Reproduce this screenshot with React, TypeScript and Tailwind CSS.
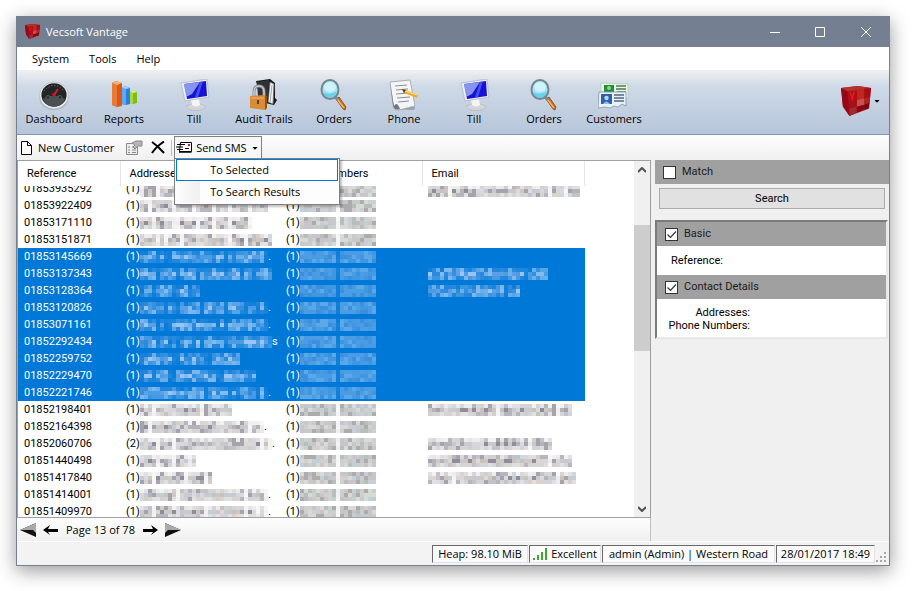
import React, { useState } from "react";
import { FaCaretDown } from "react-icons/fa";

const customers = [
  { ref: "01853935292", count: 1, address: " ### #### ##### #####", email: "##### ######################## ### ###", clipped: true },
  { ref: "01853922409", count: 1, address: "## ##### #### #### ### #### ####", email: "" },
  { ref: "01853171110", count: 1, address: "### ####  #### ### ### #### ", email: "" },
  { ref: "01853151871", count: 1, address: "#### # ### ########### ### ######", email: "" },
  { ref: "01853145669", count: 1, address: "#### #  ############# # ####### ", more: ".", email: "", selected: true },
  { ref: "01853137343", count: 1, address: "#### #### #### ########## ## ####", email: "######################## #####", selected: true },
  { ref: "01853128364", count: 1, address: " ## #### ### ##", email: "################### ###", selected: true },
  { ref: "01853120826", count: 1, address: "###### ## ##### ##### #### ## # ", more: ".", email: "", selected: true },
  { ref: "01853071161", count: 1, address: "#### #  ########### # ######### ", more: ".", email: "", selected: true },
  { ref: "01852292434", count: 1, address: "#### ## # ### # ##### ###########", more: "s", email: "", selected: true },
  { ref: "01852259752", count: 1, address: " #######  ######  #######", email: "", selected: true },
  { ref: "01852229470", count: 1, address: " ## ###  ##########  ########", email: "", selected: true },
  { ref: "01852221746", count: 1, address: "################ ##### # #### # ", more: ".", email: "", selected: true },
  { ref: "01852198401", count: 1, address: "### ########### #######", email: "################# ############## ###" },
  { ref: "01852164398", count: 1, address: "## ######################## ## ", more: ".", email: "" },
  { ref: "01852060706", count: 2, address: "#### ### ##################### # ", more: ".", email: "######################### #####" },
  { ref: "01851440498", count: 1, address: "#### ### ### #", email: "############################## #####" },
  { ref: "01851417840", count: 1, address: "### ####### #### #", email: "###### ######################### ####" },
  { ref: "01851414001", count: 1, address: "######### ################ #### ", more: ".", email: "" },
  { ref: "01851409970", count: 1, address: "### ############ ######### ## # ", more: ".", email: "" },
];

const greys = ["#c9c8cc", "#b4b3ba", "#d9d6d8", "#a5a3ad", "#c8c2bd", "#dbd8de", "#8f8d99", "#c5ccd2", "#d0c7c1"];
const phoneGreys = ["#c6cac9", "#d0d0cc", "#b7bfbd", "#c9c4cc", "#d8dad8", "#adacaa", "#c4cfd6"];
const blues = ["#4a9de4", "#6cb0ea", "#3390e0", "#5aa0e6", "#82bbf0", "#2a8ade", "#9cc4f2"];
const phoneBlues = ["#3f97e1", "#4c9ee3", "#3a90de", "#5aa8e8", "#4b9ae6"];

// Masked text: one character of the pattern is one 4px block
const Mosaic = ({ pattern, colors, seed, solid = false }: { pattern: string; colors: string[]; seed: number; solid?: boolean }) => {
  const cells: React.ReactNode[] = [];
  pattern.split("").forEach((c, x) => {
    for (let y = 0; y < 3; y++) {
      const n = Math.abs(Math.floor(Math.sin(seed * 91.7 + x * 12.9 + y * 78.2) * 43758));
      let opacity = c === " " ? 0.2 : 1;
      if (!solid && c !== " " && y === 0) opacity = n % 5 < 3 ? 0.8 : 0.35;
      if (!solid && c !== " " && y === 2) opacity = 0.8;
      cells.push(<rect key={x + "-" + y} x={x * 4} y={y * 4} width="4" height="4" fill={colors[n % colors.length]} opacity={opacity} />);
    }
  });
  return (
    <svg width={pattern.length * 4} height="12" shapeRendering="crispEdges" aria-hidden="true" className="shrink-0">
      {cells}
    </svg>
  );
};

const CubeIcon = ({ size }: { size: number }) => (
  <svg width={size} height={size} viewBox="0 0 32 32">
    <path d="M0 2 18 0 32 2 30 24 9 32 2 22Z" fill="#a80d16" />
    <path d="M0 2 18 0 32 2 7 6Z" fill="#b3322e" />
    <path d="M0 2 7 6 9 32 2 21Z" fill="#94081a" />
    <path d="M7 6 17 4.500 17 15 8 17Z" fill="#ad1119" />
    <path d="M17 4.500 25 3 25 13 17 15Z" fill="#c0281f" />
    <path d="M25 3 32 2 31 12 25 13Z" fill="#a30f16" />
    <path d="M17 15 25 13 25 20 17 22Z" fill="#c6524e" />
    <path d="M25 13 31 12 30 19 25 20Z" fill="#b3221f" />
    <path d="M8 17 17 15 17 22 9 24Z" fill="#a5101b" />
    <path d="M9 24 17 22 17 28 9 32Z" fill="#a22a32" />
    <path d="M17 22 25 20 25 25 17 28Z" fill="#8b0610" />
    <path d="M25 20 30 18 29 24 25 25Z" fill="#740410" />
    <path d="m10 7 2 7 2-8" stroke="#f3141c" strokeWidth="1.500" fill="none" />
  </svg>
);

const DashboardIcon = () => (
  <svg width="32" height="32" viewBox="0 0 32 32">
    <ellipse cx="16" cy="19" rx="14.5" ry="12" fill="#a9b0b8" />
    <ellipse cx="16" cy="16.5" rx="14.5" ry="13.5" fill="#e9ebed" stroke="#b3b8be" strokeWidth=".7" />
    <ellipse cx="16" cy="16" rx="12.6" ry="11.8" fill="#232425" />
    <path d="M5 20q11-7 22 0-3 7.500-11 7.500T5 20Z" fill="#4a5053" />
    <path d="M6 12q10-11 20 0" stroke="#8a8d8f" strokeDasharray="1 2" fill="none" />
    <circle cx="10" cy="18.500" r="2" fill="#2a3130" stroke="#58605b" />
    <circle cx="22" cy="18.500" r="2" fill="#2a3130" stroke="#58605b" />
    <path d="m16 16 4-6" stroke="#f01820" strokeWidth="1.800" />
    <circle cx="16" cy="15.500" r="1.800" fill="#d3111b" />
  </svg>
);

const ReportsIcon = () => (
  <svg width="32" height="32" viewBox="0 0 32 32">
    <path d="M4 4 8 2l6 2v23l-5 1-5-2Z" fill="#d9581a" />
    <path d="m4 4 5 2v22l-5-2Z" fill="#e97a34" />
    <path d="M4 4 8 2l6 2-5 2Z" fill="#f7b27a" />
    <path d="m14 9 3-2 5 2v16l-4 1-4-1Z" fill="#2a7fe0" />
    <path d="m14 9 4 1v16l-4-1Z" fill="#5aaaf6" />
    <path d="m14 9 3-2 5 2-4 1Z" fill="#a2d4ff" />
    <path d="m22 13 3-2 4 2v11l-4 1-3-1Z" fill="#80bd1b" />
    <path d="m22 13 3 1v11l-3-1Z" fill="#a9d838" />
    <path d="m22 13 3-2 4 2-4 1Z" fill="#d8f28f" />
  </svg>
);

const TillIcon = () => (
  <svg width="32" height="32" viewBox="0 0 32 32">
    <ellipse cx="18" cy="28" rx="9.500" ry="3.500" fill="#d3d5d8" stroke="#afb3b8" strokeWidth=".6" />
    <path d="m13 21 8-1 1 6q-4 3-8 0Z" fill="#f3f4f5" />
    <path d="m3 4 26-4 2 18-24 4Z" fill="#eef0f2" stroke="#a9b0b8" strokeWidth=".7" />
    <path d="m6 5 22-3 1 15-20 3Z" fill="#1512d6" />
    <path d="m6 5 16-2-8 12-6 3Z" fill="#a9c0f8" opacity=".75" />
    <path d="m22 3 3-1-5 16-3 .5Z" fill="#5a6cf0" opacity=".7" />
  </svg>
);

const AuditIcon = () => (
  <svg width="32" height="32" viewBox="0 0 32 32">
    <path d="m8 2 14-2 5 4v15l2 2-3 5-13-3Z" fill="#171819" />
    <path d="m22 3 4 2-1 20-5-2Z" fill="#f1f2f3" stroke="#676a6d" strokeWidth=".8" />
    <path d="m24 6-2 18" stroke="#a5a8ab" />
    <path d="m9 3 12-2-1 21-10-3Z" fill="#303234" />
    <path d="M6 17v-4q0-6 5-6t5 6v4" stroke="#8a9097" strokeWidth="3" fill="none" />
    <path d="M6 17v-4q0-6 5-6t5 6v4" stroke="#dfe2e5" strokeWidth="1" fill="none" />
    <path d="m2 17 15-1 2 2v11l-2 2-15-2Z" fill="#d98b38" />
    <path d="m17 16 2 2v11l-2 2Z" fill="#91531b" />
    <path d="M3 19h13" stroke="#efb16b" />
    <path d="M9 21h2v4H9z" fill="#6a3b12" />
  </svg>
);

const OrdersIcon = () => (
  <svg width="32" height="32" viewBox="0 0 32 32">
    <path d="m18 20 7 10 2 1 1-3-7-10Z" fill="#c97424" stroke="#80440f" strokeWidth=".8" />
    <path d="m19 20 7 9" stroke="#f5b565" strokeWidth="1.300" />
    <path d="m16 17 4 4" stroke="#7c8890" strokeWidth="3" />
    <ellipse cx="12" cy="10.500" rx="8.500" ry="9.500" fill="#a3e4f6" stroke="#79858c" strokeWidth="2" />
    <ellipse cx="12" cy="8" rx="6" ry="5" fill="#dcf8ff" opacity=".75" />
    <path d="M5 13q7 4 14-1-2 7-7 7t-7-6Z" fill="#5bcbe8" opacity=".8" />
  </svg>
);

const PhoneIcon = () => (
  <svg width="32" height="32" viewBox="0 0 32 32">
    <path d="m4 5 5 21 18 2-1 3-20-1Z" fill="#9a9da1" />
    <path d="m2 3 20-2 5 26-16 4q-5 1-6-5Z" fill="#f4f5f6" stroke="#9da1a6" strokeWidth=".8" />
    <path d="m2 3 4 24q3-5 6 3-6 2-7-4Z" fill="#74787d" />
    <path d="m7 7 12-1M8 11l12-1M8 15l13-1M9 19l13-1M10 23l11-1" stroke="#8a8e93" />
    <path d="m14 10 2 4 13 5 1-3-12-5Z" fill="#edae2c" />
    <path d="m14 10 4 1-2 3Z" fill="#4d3826" />
    <path d="m17 12 12 4" stroke="#ffe27b" />
  </svg>
);

const CustomersIcon = () => (
  <svg width="32" height="32" viewBox="0 0 32 32">
    <path d="m3 4 27 1v14H3Z" fill="#e8f6e6" stroke="#a8cfa6" strokeWidth=".7" />
    <path d="M6 6h10v8H6z" fill="#278c3b" />
    <circle cx="11" cy="9" r="2" fill="#8fd798" />
    <path d="M18 7h10M18 10h10M19 13h9" stroke="#4d7a54" strokeWidth="1.500" />
    <path d="M1 13h27v14l-4-2-4 3-4-1-4 2-5-1-7 1Z" fill="#e9f2fb" stroke="#8295a9" strokeWidth=".8" />
    <path d="M3 15h11v10H3z" fill="#2b62aa" />
    <circle cx="8.500" cy="19" r="2.200" fill="#b9d8f4" />
    <path d="M5 25q3-5 7 0Z" fill="#94c0ec" />
    <path d="M16 16h10M16 19h10M16 22h10" stroke="#56677b" strokeWidth="1.400" />
  </svg>
);

const modules = [
  { name: "Dashboard", icon: <DashboardIcon /> },
  { name: "Reports", icon: <ReportsIcon /> },
  { name: "Till", icon: <TillIcon /> },
  { name: "Audit Trails", icon: <AuditIcon /> },
  { name: "Orders", icon: <OrdersIcon /> },
  { name: "Phone", icon: <PhoneIcon /> },
  { name: "Till", icon: <TillIcon /> },
  { name: "Orders", icon: <OrdersIcon /> },
  { name: "Customers", icon: <CustomersIcon /> },
];

const Check = ({ label, checked = false }: { label: string; checked?: boolean }) => (
  <label className="flex h-6 items-center gap-[6px] bg-[#a0a0a0] pl-2 text-[#1c1c1c]">
    <span className="grid">
      <input
        type="checkbox"
        defaultChecked={checked}
        className="peer col-start-1 row-start-1 size-[13px] appearance-none border border-[#333] bg-white"
      />
      <svg viewBox="0 0 13 13" className="pointer-events-none invisible col-start-1 row-start-1 size-[13px] peer-checked:visible">
        <path d="m2.500 6.500 3 3 5.500-6" stroke="#333" strokeWidth="1.200" fill="none" />
      </svg>
    </span>
    {label}
  </label>
);

const App = () => {
  const [menuOpen, setMenuOpen] = useState(true);

  return (
    <div className="min-h-screen bg-white pt-4 pr-6 pb-6 pl-4 font-['Open_Sans',sans-serif] text-[11px] leading-4 text-black">
      <div className="flex flex-col border border-t-0 border-[#748092] bg-[#f0f0f0] shadow-[0_5px_18px_rgba(0,0,0,0.4)]">
        {/* Title bar */}
        <header className="flex h-[31px] items-center bg-[#748092] text-white">
          <div className="flex items-center gap-[6px] pl-2">
            <CubeIcon size={15} />
            <h1>Vecsoft Vantage</h1>
          </div>
          <div className="ml-auto flex">
            <button aria-label="Minimize" className="flex h-[31px] w-[45px] items-center justify-center">
              <svg width="10" height="10" stroke="white"><path d="M0 5.500h10" /></svg>
            </button>
            <button aria-label="Maximize" className="flex h-[31px] w-[46px] items-center justify-center">
              <svg width="10" height="10" stroke="white" fill="none"><path d="M.5.5h9v9h-9z" /></svg>
            </button>
            <button aria-label="Close" className="flex h-[31px] w-[46px] items-center justify-center">
              <svg width="10" height="10" stroke="white"><path d="m0 0 10 10M10 0 0 10" /></svg>
            </button>
          </div>
        </header>

        {/* Menu */}
        <nav className="flex h-[23px] items-center gap-5 bg-white pl-[15px]">
          <button>System</button>
          <button>Tools</button>
          <button>Help</button>
        </nav>

        {/* Modules */}
        <div className="flex h-[65px] items-start border-b border-[#8497b0] bg-linear-to-b from-[#f0f0f0] via-[#cfdae7] via-25% to-[#b6c5da] pl-[2px]">
          {modules.map((m, index) => (
            <button key={index} className="flex w-[70px] flex-col items-center pt-[9px] whitespace-nowrap">
              {m.icon}
              {m.name}
            </button>
          ))}
          <button aria-label="Vantage" className="mt-4 mr-2 ml-auto flex items-center gap-[2px]">
            <CubeIcon size={30} />
            <FaCaretDown size={8} />
          </button>
        </div>

        {/* Customer tools */}
        <div className="flex h-[25px] items-center bg-linear-to-b from-[#fdfdfd] to-[#f0f0f0] pl-1">
          <button className="flex items-center gap-[6px]">
            <svg width="11" height="14" fill="white" stroke="black"><path d="M.5.5h6l4 4v9H.5zM6.500.5v4h4" /></svg>
            New Customer
          </button>
          <button aria-label="Properties" className="ml-3">
            <svg width="17" height="15" fill="none" stroke="#8a8a8a">
              <path d="M.5 3.500h11v11H.5z" fill="#ededed" />
              <path d="M2 7h2M6 7h4M2 10h2M6 10h4M2 12.500h2M6 12.500h4" />
              <path d="m6 3 4-2h6v5h-4l-3 3-2-2 2-2Z" fill="#b5b5b5" />
            </svg>
          </button>
          <button aria-label="Delete" className="ml-2">
            <svg width="14" height="13" stroke="black" fill="none"><path d="M1 1q6 4 12 11" strokeWidth="2" /><path d="M13 .5Q5 6 1 12" strokeWidth="2" /></svg>
          </button>
          <div className="mr-[2px] ml-[6px] h-4 w-px bg-[#bdbdbd]" />
          <div className="relative self-stretch">
            <button
              aria-expanded={menuOpen}
              onClick={() => setMenuOpen(!menuOpen)}
              className="mt-px flex h-6 w-[88px] items-center gap-1 border border-b-0 border-[#808080] bg-[#f7f7f7] pb-[2px] pl-px whitespace-nowrap"
            >
              <svg width="16" height="11" fill="none" stroke="black">
                <path d="M4.500.5h11v9h-12z" fill="white" />
                <path d="M1 2.500h8M0 5h7M1 7.500h6" strokeWidth="1.200" />
                <path d="M3 10h12.500" strokeWidth="1.500" />
                <path d="M9 6.500h4" />
                <path d="M12 2h2v2h-2z" fill="#d71920" stroke="none" />
              </svg>
              Send SMS
              <FaCaretDown size={8} />
            </button>
            {menuOpen && (
              <div role="menu" className="absolute top-[23px] left-0 z-20 w-[166px] border border-[#808080] bg-[#fdfdfd] p-px pt-0 shadow-[2px_2px_2px_rgba(0,0,0,0.25)]">
                <button role="menuitem" className="block h-[22px] w-full border border-[#0078d7] bg-white pl-[33px] text-left">To Selected</button>
                <button role="menuitem" className="flex h-[22px] w-full items-center gap-[10px]">
                  <span className="h-full w-6 bg-linear-to-r from-[#fcfcfc] to-[#f0f0f0]" />
                  To Search Results
                </button>
              </div>
            )}
          </div>
        </div>

        <div className="flex items-stretch">
          {/* Customer list */}
          <main className="min-w-0 flex-1">
            <div className="flex h-[358px] overflow-hidden border border-[#a0a0a0] bg-white font-['Roboto',sans-serif] text-[11px]">
              <div className="flex-1">
                <table className="w-[567px] table-fixed border-collapse">
                  <thead>
                    <tr className="h-[25px] text-left">
                      <th className="w-[102px] border-r border-[#e5e5e5] pl-[9px] font-normal">Reference</th>
                      <th className="w-[160px] border-r border-[#e5e5e5] pl-[9px] font-normal">Addresses</th>
                      <th className="w-[142px] border-r border-[#e5e5e5] pl-[9px] font-normal">Phone Numbers</th>
                      <th className="border-r border-[#e5e5e5] pl-[9px] font-normal">Email</th>
                    </tr>
                  </thead>
                  <tbody>
                    {customers.map((c, index) => {
                      const height = c.clipped ? "flex h-[11px] items-end overflow-hidden pl-[6px]" : "flex h-[17px] items-center overflow-hidden pl-[6px]";
                      return (
                        <tr key={c.ref} className={c.selected ? "bg-[#0078d7] text-white" : ""}>
                          <td className="p-0"><div className={height}>{c.ref}</div></td>
                          <td className="p-0">
                            <div className={height}>
                              <span className="w-[14px] shrink-0">({c.count})</span>
                              <Mosaic pattern={c.address} colors={c.selected ? blues : greys} seed={index + 1} />
                              {c.more}
                            </div>
                          </td>
                          <td className="p-0">
                            <div className={height}>
                              <span className="w-[14px] shrink-0">(1)</span>
                              <Mosaic pattern="######### #########" colors={c.selected ? phoneBlues : phoneGreys} seed={index + 40} solid />
                            </div>
                          </td>
                          <td className="p-0">
                            <div className={height}>
                              <Mosaic pattern={c.email} colors={c.selected ? blues : greys} seed={index + 80} />
                            </div>
                          </td>
                        </tr>
                      );
                    })}
                  </tbody>
                </table>
              </div>
              {/* Scroll bar */}
              <div className="flex w-4 flex-col items-center bg-[#f0f0f0]">
                <svg width="8" height="6" fill="none" stroke="#505050" strokeWidth="2" className="mt-[6px]"><path d="m0 5 4-4 4 4" /></svg>
                <div className="mt-[52px] h-[126px] w-full bg-[#cdcdcd]" />
                <svg width="8" height="6" fill="none" stroke="#505050" strokeWidth="2" className="mt-auto mb-[5px]"><path d="m0 1 4 4 4-4" /></svg>
              </div>
            </div>

            {/* Paging */}
            <div className="flex h-[23px] items-center border-r border-[#c0c0c0] bg-linear-to-b from-[#fdfdfd] to-[#f0f0f0] pl-[3px]">
              <button aria-label="First page">
                <svg width="16" height="14"><path d="M0 7 16 0v14Z" fill="#111" /><path d="M0 7 16 0v10l-3-3Z" fill="#aaa" /></svg>
              </button>
              <button aria-label="Previous page" className="ml-[7px]">
                <svg width="15" height="10"><path d="m0 5 7-5-2 4h10v3H5l2 3Z" /></svg>
              </button>
              <span className="mx-2">Page 13 of 78</span>
              <button aria-label="Next page">
                <svg width="15" height="10"><path d="m15 5-7-5 2 4H0v3h10l-2 3Z" /></svg>
              </button>
              <button aria-label="Last page" className="ml-[7px]">
                <svg width="16" height="14"><path d="M0 0 16 7 0 14Z" fill="#111" /><path d="M0 0 16 7H3L0 10Z" fill="#aaa" /></svg>
              </button>
            </div>
          </main>

          {/* Search panel */}
          <aside className="ml-1 w-[234px] font-['Roboto',sans-serif] text-[11px]">
            <Check label="Match" />
            <div className="px-1 pt-1 pb-[11px]">
              <button className="h-[21px] w-full border border-[#adadad] bg-[#e1e1e1]">Search</button>
            </div>
            <div className="mr-px border-2 border-t-[#7a7a7a] border-r-[#e8e8e8] border-b-[#e8e8e8] border-l-[#7a7a7a] bg-white">
              <Check label="Basic" checked />
              <p className="flex h-[29px] items-center pl-[14px]">Reference:</p>
              <Check label="Contact Details" checked />
              <div className="flex h-[38px] w-[93px] flex-col justify-center pt-[2px] text-right leading-[13px] whitespace-nowrap">
                <p>Addresses:</p>
                <p>Phone Numbers:</p>
              </div>
            </div>
          </aside>
        </div>

        {/* Status bar */}
        <footer className="flex h-6 items-center justify-end gap-px border-t border-white bg-[#f3f3f3] pr-[2px] whitespace-nowrap">
          <div className="flex h-[18px] w-[96px] items-center justify-center border border-t-[#696969] border-r-[#e3e3e3] border-b-[#e3e3e3] border-l-[#696969] bg-[#fafafa]">Heap: 98.10 MiB</div>
          <div className="flex h-[18px] w-[72px] items-center justify-center gap-[3px] border border-t-[#696969] border-r-[#e3e3e3] border-b-[#e3e3e3] border-l-[#696969] bg-[#fafafa]">
            <svg width="15" height="12" fill="#3fa535"><path d="M0 10h2v2H0zM4 7h2v5H4zM8 4h2v8H8zM12 0h2v12h-2z" /></svg>
            Excellent
          </div>
          <div className="flex h-[18px] w-[173px] items-center justify-center border border-t-[#696969] border-r-[#e3e3e3] border-b-[#e3e3e3] border-l-[#696969] bg-[#fafafa]">admin (Admin) | Western Road</div>
          <div className="flex h-[18px] w-[99px] items-center justify-center border border-t-[#696969] border-r-[#e3e3e3] border-b-[#e3e3e3] border-l-[#696969] bg-[#fafafa]">28/01/2017 18:49</div>
          <svg width="11" height="11" fill="#a8a8a8" className="mt-2"><path d="M8 0h2v2H8zM4 4h2v2H4zM8 4h2v2H8zM0 8h2v2H0zM4 8h2v2H4zM8 8h2v2H8z" /></svg>
        </footer>
      </div>
    </div>
  );
};

export default App;
